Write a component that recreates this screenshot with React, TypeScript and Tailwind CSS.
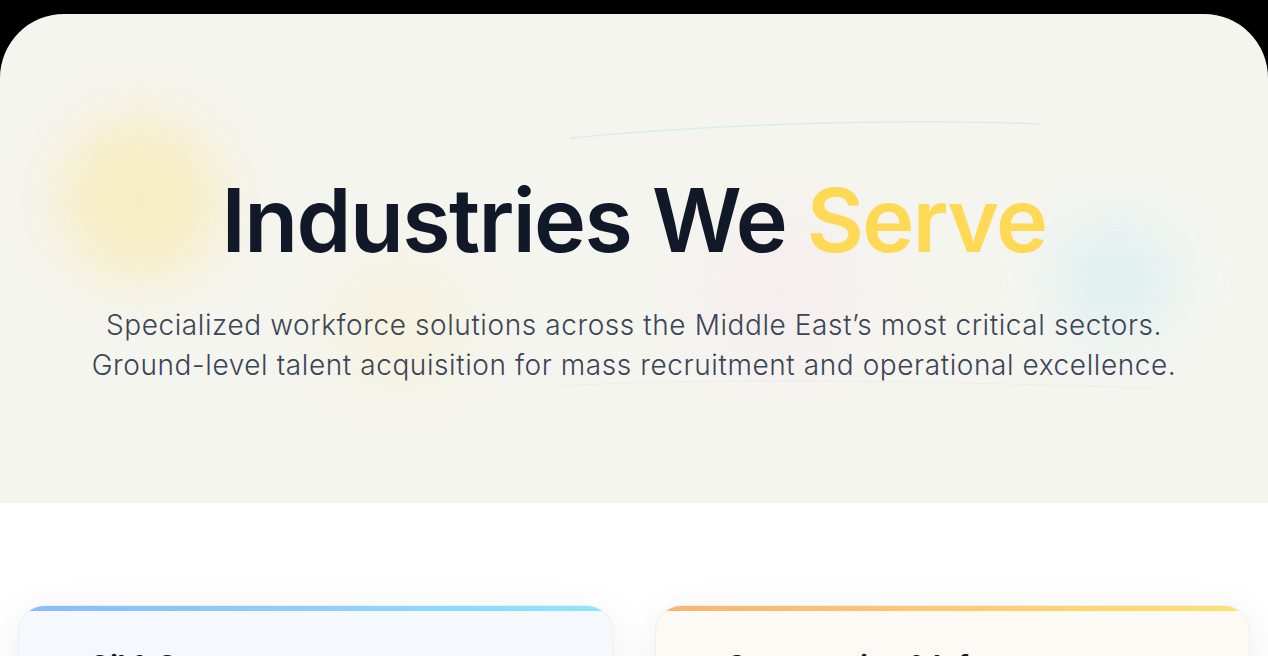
import React from "react";

const sectors = [
  {
    title: "Oil & Gas",
    bg: "bg-[#f5f9fd]",
    bar: "bg-gradient-to-r from-[#8bbafb] to-[#8ee6f9]",
  },
  {
    title: "Construction & Infrastructure",
    bg: "bg-[#fdf9f4]",
    bar: "bg-gradient-to-r from-[#fbb273] to-[#fde270]",
  },
];

export default function App() {
  return (
    <div className="min-h-screen bg-black pt-[14px] font-['Inter','Liberation_Sans',sans-serif] overflow-hidden">
      {/* Hero */}
      <section className="relative h-[489px] rounded-t-[64px] bg-[#f5f5f0] overflow-hidden">
        {/* soft blobs */}
        <div className="absolute left-[55px] top-[100px] w-[170px] h-[170px] rounded-full bg-[#f8eab0] opacity-70 blur-[30px]" />
        <div className="absolute left-[330px] top-[250px] w-[140px] h-[120px] rounded-full bg-[#f7efc8] opacity-50 blur-[35px]" />
        <div className="absolute left-[700px] top-[220px] w-[160px] h-[120px] rounded-full bg-[#f6e6ea] opacity-50 blur-[35px]" />
        <div className="absolute left-[1050px] top-[205px] w-[130px] h-[120px] rounded-full bg-[#dcf0f0] opacity-80 blur-[28px]" />
        <svg className="absolute inset-0 w-full h-full pointer-events-none" viewBox="0 0 1268 489" fill="none">
          <path d="M570 124 C 720 110, 900 104, 1040 110" stroke="#d8eeee" strokeWidth="1.5" />
          <path d="M560 372 C 700 364, 900 366, 1150 374" stroke="#f2eaea" strokeWidth="1" />
        </svg>

        <div className="relative flex flex-col items-center pt-[158px]">
          <h1 className="text-[88px] leading-[96px] font-semibold tracking-[-0.018em] text-[#111827]">
            Industries We <span className="text-[#fdd955]">Serve</span>
          </h1>
          <p className="mt-[37px] text-center text-[28px] leading-[40px] font-light tracking-[0.021em] text-[#3c4556]">
            Specialized workforce solutions across the Middle East’s most critical sectors.
            <br />
            Ground-level talent acquisition for mass recruitment and operational excellence.
          </p>
        </div>
      </section>

      {/* Cards */}
      <section className="bg-white px-[18px] pt-[102px] pb-20">
        <div className="grid grid-cols-2 gap-[42px]">
          {sectors.map((s) => (
            <div
              key={s.title}
              className={`rounded-[26px] ${s.bg} border border-[#eef0f3] shadow-[0_10px_40px_rgba(0,0,0,0.08)] overflow-hidden h-[320px]`}
            >
              <div className={`h-[5px] ${s.bar}`} />
              <h3 className="px-[70px] pt-[34px] text-[28px] font-bold text-[#111827] tracking-[-0.01em]">
                {s.title}
              </h3>
            </div>
          ))}
        </div>
      </section>
    </div>
  );
}
